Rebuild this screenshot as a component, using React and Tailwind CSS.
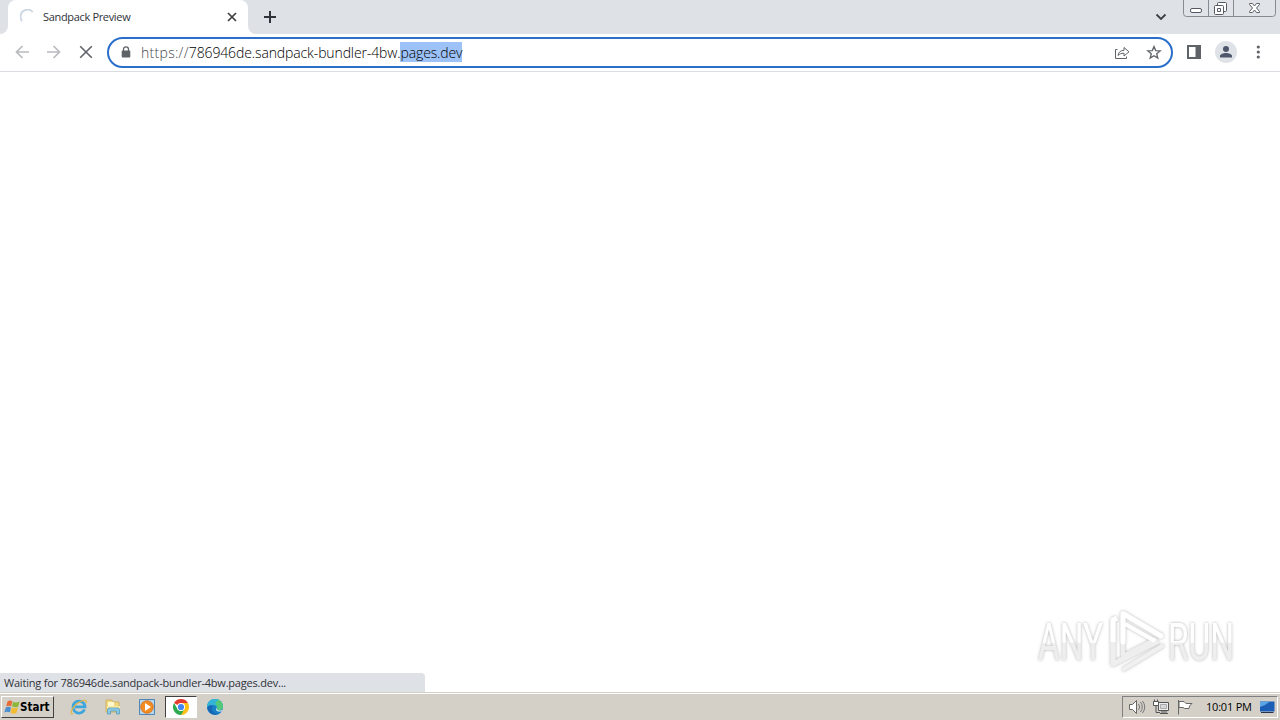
import React from "react";

function Ic({ w = 16, h = 16, vb, className = "", children }) {
  return (
    <svg width={w} height={h} viewBox={vb || `0 0 ${w} ${h}`} className={"block shrink-0 " + className} fill="none">
      {children}
    </svg>
  );
}

function TabStrip() {
  return (
    <div className="flex h-[34px] shrink-0 items-start bg-[#dee1e6]">
      <div className="flex h-[34px] w-2 items-end">
        <Ic w={8} h={8}><path d="M8 0V8H0A8 8 0 0 0 8 0Z" fill="#fff" /></Ic>
      </div>
      <div className="flex h-[34px] w-[240px] items-center rounded-t-lg bg-white pl-3">
        <Ic w={16} h={16}><path d="M2.200 12.200A7 7 0 0 1 12.800 3" stroke="#ccd6e2" strokeWidth="1.800" /></Ic>
        <div className="ml-[7px] w-[180px] whitespace-nowrap font-['Open_Sans',sans-serif] text-[11px] leading-4 tracking-[-0.33px] text-[#303338]">Sandpack Preview</div>
        <Ic w={10} h={10} className="ml-1"><path d="M1 1L9 9M9 1L1 9" stroke="#3c4043" strokeWidth="1.700" /></Ic>
      </div>
      <div className="flex h-[34px] w-2 items-end">
        <Ic w={8} h={8}><path d="M0 0V8H8A8 8 0 0 1 0 0Z" fill="#fff" /></Ic>
      </div>
      <Ic w={12} h={12} className="ml-2 mt-[11px]"><path d="M6 0V12M0 6H12" stroke="#30343a" strokeWidth="2" /></Ic>
      <div className="flex-1" />
      <Ic w={12} h={8} className="mr-[16px] mt-[13px]"><path d="M1.500 1.500L6 6L10.500 1.500" stroke="#3c4043" strokeWidth="1.800" /></Ic>
      <Ic w={93} h={17} className="mr-1">
        <path d="M.5 0V13.500Q.5 16.500 3.500 16.500H89.500Q92.500 16.500 92.500 13.500V0M25.500 0V16M50.500 0V16" fill="#e0e3e7" stroke="#858b93" />
        <rect x="7.500" y="8.500" width="11" height="4" rx="1.500" fill="#fff" stroke="#555a61" />
        <rect x="34.500" y="2.500" width="9" height="9" rx="1" fill="#fff" stroke="#555a61" />
        <rect x="31.500" y="5.500" width="9" height="9" rx="1" fill="#fff" stroke="#555a61" />
        <path d="M34.500 8.500h3v3h-3z" stroke="#555a61" />
        <path d="M66.500 3.500h3l2 2.500 2-2.500h3v1l-3 3.500 3 3.500v1h-3l-2-2.500-2 2.500h-3v-1l3-3.500-3-3.500z" fill="#fff" stroke="#5b6067" />
      </Ic>
    </div>
  );
}

function Toolbar() {
  return (
    <div className="flex h-[38px] shrink-0 items-center border-b border-[#d9dce0] bg-white">
      <Ic w={14} h={14} className="ml-[15px] -mt-px"><path d="M14 7H1.500M7.500 1L1.500 7L7.500 13" stroke="#b9bbbe" strokeWidth="1.700" /></Ic>
      <Ic w={14} h={14} className="ml-[18px] -mt-px"><path d="M0 7H12.500M6.500 1L12.500 7L6.500 13" stroke="#b9bbbe" strokeWidth="1.700" /></Ic>
      <Ic w={14} h={14} className="ml-[18px] -mt-px"><path d="M1.200 1.200L12.800 12.800M12.800 1.200L1.200 12.800" stroke="#5f6368" strokeWidth="1.600" /></Ic>
      <div className="ml-[14px] flex h-[31px] w-[1066px] items-center rounded-full border-2 border-[#2a6fc9] bg-white pl-3 pr-[9px]">
        <Ic w={10} h={12} className="-mt-px"><path d="M2.500 5V3.300a2.500 2.500 0 0 1 5 0V5" stroke="#5f6368" strokeWidth="1.300" /><rect x=".7" y="4.500" width="8.600" height="7" rx="1" fill="#5f6368" /></Ic>
        <div className="ml-[10px] flex-1 whitespace-nowrap font-['Open_Sans',sans-serif] text-[14px] font-light leading-5 tracking-[-0.120px] text-black">
          <span className="tracking-[0.300px] text-[#44484c]">https://</span>786946de.sandpack-bundler-4bw.<span className="-mt-px inline-block h-5 bg-[#9cc2f7] pt-px align-top leading-[20px]">pages.dev</span>
        </div>
        <Ic w={16} h={16}><path d="M3.500 4.500H1.500V13.500H12.500V11.500M4 10.500C4.500 7 6.500 5.500 10 5.300V2.500L15 6.800L10 11V8.200C7 8.200 5.500 9 4 10.500Z" stroke="#5f6368" strokeWidth="1" /></Ic>
        <Ic w={16} h={16} className="ml-4"><path d="M8 1.500L9.700 5.600L14.200 5.900L10.700 8.700L11.800 13.100L8 10.700L4.200 13.100L5.300 8.700L1.800 5.900L6.300 5.600Z" stroke="#5f6368" strokeWidth="1.300" /></Ic>
      </div>
      <Ic w={14} h={14} className="ml-[14px] -mt-0.5"><path d="M1 1H13V13H1Z" stroke="#5f6368" strokeWidth="2" /><path d="M8.500 1H14V13H8.500Z" fill="#5f6368" /></Ic>
      <Ic w={22} h={22} className="ml-[14px] -mt-0.5"><circle cx="11" cy="11" r="11" fill="#dfe2e7" /><circle cx="11" cy="8" r="3" fill="#4d566b" /><path d="M5 16.500V15C5 13 8.500 12 11 12S17 13 17 15V16.500Z" fill="#4d566b" /></Ic>
      <Ic w={4} h={14} className="ml-[19px] -mt-px"><circle cx="2.300" cy="2" r="1.600" fill="#5f6368" /><circle cx="2.300" cy="7" r="1.600" fill="#5f6368" /><circle cx="2.300" cy="12" r="1.600" fill="#5f6368" /></Ic>
    </div>
  );
}

function Watermark() {
  return (
    <Ic w={240} h={84} className="absolute left-[1030px] top-[602px] overflow-visible">
      <defs>
        <filter id="glow" x="-20%" y="-20%" width="140%" height="140%"><feDropShadow dx="0" dy="0" stdDeviation="1.800" floodColor="#666" floodOpacity=".55" /></filter>
        <linearGradient id="half" x1="0" y1="18" x2="0" y2="58" gradientUnits="userSpaceOnUse"><stop offset=".56" stopColor="#fff" /><stop offset=".57" stopColor="#eee" /></linearGradient>
      </defs>
      <g filter="url(#glow)">
        <g fill="url(#half)" fontFamily="Roboto, sans-serif" fontSize="51">
          <text x="8" y="57.500" textLength="65" lengthAdjust="spacingAndGlyphs">ANY</text>
          <text x="138" y="57.500" textLength="66" lengthAdjust="spacingAndGlyphs">RUN</text>
        </g>
        <path d="M83 19V62L128 39" stroke="#efefef" strokeWidth="5" strokeLinejoin="round" />
        <path d="M93 38V54L126 37" stroke="#eee" strokeWidth="4" />
        <path d="M94 67L132 44" stroke="#f0f0f0" strokeWidth="4" strokeLinecap="round" />
        <path d="M83 40V18L87 16" stroke="#fff" strokeWidth="5" strokeLinejoin="round" />
        <path d="M93 40V11.500L131 34" stroke="#fff" strokeWidth="5" strokeLinejoin="round" strokeLinecap="round" />
        <path d="M95 22L125 39" stroke="#fff" strokeWidth="4" />
      </g>
    </Ic>
  );
}

function Taskbar() {
  return (
    <div className="flex h-7 shrink-0 items-center border-t border-[#d4d0c8] bg-[#d4d0c8] pt-px shadow-[inset_0_1px_0_#fff]">
      <div className="ml-px flex h-[22px] w-[53px] items-center border border-b-[#404040] border-l-white border-r-[#404040] border-t-white pl-[2px]">
        <Ic w={16} h={16}>
          <path d="M3.500 2.500Q6 .5 8.300 2.200L7.200 7.300Q4.500 6 2.200 7.500Z" fill="#e66b36" />
          <path d="M9 2.800Q12 4.500 15.500 2.500L14.200 7.700Q11 9 8 7.500Z" fill="#8bb83c" />
          <path d="M1.800 8.500Q4.500 7.200 7 8.500L5.800 13.500Q3.500 12 .3 13.500Z" fill="#4b8fce" />
          <path d="M7.800 8.500Q11 10 14 8.500L12.500 14Q9.500 15.500 6.600 13.800Z" fill="#f3bb31" />
        </Ic>
        <div className="font-['DejaVu_Sans_Condensed','DejaVu_Sans',sans-serif] text-[11.500px] font-bold leading-4 text-black">Start</div>
      </div>
      <Ic w={18} h={18} className="ml-4">
        <path d="M14.500 11.500A6 6 0 1 1 15 8.800H5" stroke="#3ba5dc" strokeWidth="2.700" />
        <path d="M3 15.500C-.5 17 1 11 6 6.500S17 .5 16.500 5" stroke="#e0b54b" strokeWidth="1.300" />
      </Ic>
      <Ic w={18} h={18} className="ml-4">
        <path d="M2 2H8L9 4H15V14H2Z" fill="#f1d77d" stroke="#c8a74d" strokeWidth=".7" />
        <path d="M4 4H10V9H4Z" fill="#fff7cf" /><path d="M3 8H16V11H3Z" fill="#f9e9a0" />
        <path d="M3.500 16V12Q3.500 10 5 10H14Q15.500 10 15.500 12V16H12.500V13H6.500V16Z" fill="#8bc8e6" stroke="#4b97bd" strokeWidth=".7" />
      </Ic>
      <Ic w={18} h={18} className="ml-4">
        <path d="M1.500 1.500H16.500V16.500H1.500Z" fill="#b7d7ee" stroke="#4e86b7" />
        <circle cx="9" cy="9" r="6.300" fill="#f28c22" stroke="#d6660b" strokeWidth=".7" /><path d="M7 5L13 9L7 13Z" fill="#fff" />
      </Ic>
      <div className="ml-[9px] flex h-[22px] w-8 items-center justify-center border border-b-white border-l-[#404040] border-r-white border-t-[#404040] bg-white">
        <Ic w={16} h={16}>
          <path d="M8 8L1.070 4A8 8 0 0 1 14.930 4H8Z" fill="#e33b2e" />
          <path d="M8 8L8 4H14.930A8 8 0 0 1 8 16Z" fill="#fbc116" />
          <path d="M1.070 4A8 8 0 0 0 8 16L11.460 10L8 12L4.540 10Z" fill="#2da94f" />
          <circle cx="8" cy="8" r="4" fill="#fff" /><circle cx="8" cy="8" r="3.100" fill="#4285f4" />
        </Ic>
      </div>
      <Ic w={16} h={16} className="ml-[10px]">
        <circle cx="8" cy="8" r="8" fill="#187fc6" />
        <path d="M.5 5A8 8 0 0 1 16 8C16 11 12 12 10 10.500C11 8 9 6 6 6C4 6 1 7 .2 9C0 7 .1 6 .5 5Z" fill="#35b5d5" />
        <path d="M11 .6A8 8 0 0 1 16 8C16 11 12 12 10 10.500C11 8 10 6 8 5Z" fill="#52c878" />
        <path d="M6 7C3 10 6 15 12 14.500A8 8 0 0 1 .2 9C1 6 4 5.500 6 7Z" fill="#1666b5" />
        <path d="M9.500 8.300C9 11.500 12 12.300 15.300 10.900L14.700 12.200C11 13.500 7.500 11.500 9.500 8.300Z" fill="#e5f3f8" />
      </Ic>
      <div className="flex-1" />
      <div className="mr-[2px] flex h-[22px] w-[156px] items-center border border-b-white border-l-[#808080] border-r-white border-t-[#808080] pl-[6px]">
        <Ic w={18} h={16}>
          <path d="M.5 5.500H3.500L7.500 1.500V14.500L3.500 10.500H.5Z" fill="#fff" stroke="#666" />
          <path d="M9.500 5Q12 8 9.500 11M11.500 3Q15 8 11.500 13M13.500 2Q18 8 13.500 14" stroke="#777" />
        </Ic>
        <Ic w={17} h={16} className="ml-[6px]">
          <path d="M5.500 3.500H15.500V11.500H5.500Z" fill="#eee" stroke="#555" />
          <path d="M7.500 5.500H13.500V9.500H7.500Z" fill="#d8d8d8" stroke="#aaa" /><path d="M7 14.500H15M8 13H14" stroke="#555" />
          <path d="M.5 2.500H5.500V6.500H.5ZM1.500 .5V2M4.500 .5V2" fill="#fff" stroke="#555" /><path d="M3 7V13.500H7" stroke="#555" />
        </Ic>
        <Ic w={17} h={16} className="ml-[6px]"><path d="M2.500 1V15.500M3 2.500H8L10 4.500H16L13.500 7L13 9.500H8.500L7 8.500H3Z" fill="#fff" stroke="#666" /></Ic>
        <div className="ml-[13px] w-[47px] whitespace-nowrap font-['Open_Sans',sans-serif] text-[11px] leading-4 tracking-[-0.200px] text-black">10:01 PM</div>
        <Ic w={16} h={14} className="ml-[6px]"><path d="M1 1.500H15.500V11.500H1Z" fill="#1c5eb5" /><path d="M1 1.500H11Q7 5 1 7Z" fill="#5da4e3" /><path d="M2 12.500H14.500" stroke="#26334a" /></Ic>
      </div>
    </div>
  );
}

export default function App() {
  return (
    <div className="relative flex h-[720px] w-[1280px] flex-col overflow-hidden bg-white">
      <TabStrip />
      <Toolbar />
      <main className="flex flex-1 items-end bg-white">
        <div className="flex h-[19px] w-[425px] items-center rounded-tr bg-[#dee1e6] pl-1 font-['Open_Sans',sans-serif] text-[11px] leading-4 tracking-[-0.210px] text-[#303338]">
          <span className="whitespace-nowrap">Waiting for 786946de.sandpack-bundler-4bw.pages.dev...</span>
        </div>
      </main>
      <Taskbar />
      <Watermark />
    </div>
  );
}
